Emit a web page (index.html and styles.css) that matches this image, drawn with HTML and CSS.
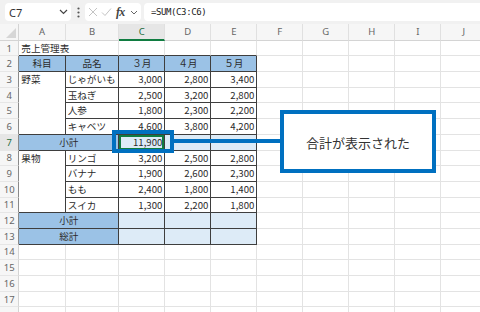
FILE: index.html
```html
<!DOCTYPE html>
<html lang="ja">
<head>
<meta charset="utf-8">
<title>売上管理表</title>
<link rel="stylesheet" href="styles.css">
</head>
<body>
<div class="app">
  <div class="toolbar">
    <div class="namebox"><span>C7</span>
      <svg width="9" height="6" viewBox="0 0 9 6"><polyline points="1,1 4.5,4.5 8,1" fill="none" stroke="#444" stroke-width="1.2"/></svg>
    </div>
    <div class="kebab"><svg width="3" height="11" viewBox="0 0 3 11"><circle cx="1.5" cy="1.5" r="1.1" fill="#555"/><circle cx="1.5" cy="5.5" r="1.1" fill="#555"/><circle cx="1.5" cy="9.5" r="1.1" fill="#555"/></svg></div>
    <div class="fxbox">
      <span class="ico"><svg width="10" height="10" viewBox="0 0 10 10"><path d="M1 1 L9 9 M9 1 L1 9" stroke="#c4c4c4" stroke-width="1" fill="none"/></svg></span>
      <span class="ico"><svg width="11" height="10" viewBox="0 0 11 10"><path d="M1 5.5 L4 8.5 L10 1.5" stroke="#c4c4c4" stroke-width="1" fill="none"/></svg></span>
      <span class="ico fx">fx</span>
      <span class="ico"><svg width="8" height="5" viewBox="0 0 8 5"><polyline points="1,1 4,4 7,1" fill="none" stroke="#666" stroke-width="1"/></svg></span>
    </div>
    <div class="formula">=SUM(C3:C6)</div>
  </div>

  <div class="sheet">
    <div class="corner"><svg width="10" height="10" viewBox="0 0 10 10"><polygon points="10,0 10,10 0,10" fill="#d6d6d6"/></svg></div>
    <div class="ch">A</div><div class="ch">B</div><div class="ch sel">C</div><div class="ch">D</div><div class="ch">E</div><div class="ch">F</div><div class="ch">G</div><div class="ch">H</div><div class="ch">I</div><div class="ch">J</div>

    <div class="rh">1</div>
    <div class="c span2 above">売上管理表</div><div class="c above"></div><div class="c above"></div><div class="c above"></div>
    <div class="c"></div><div class="c"></div><div class="c"></div><div class="c"></div><div class="c"></div>

    <div class="rh tl">2</div>
    <div class="c t hd">科目</div><div class="c t hd">品名</div><div class="c t hd">３月</div><div class="c t hd">４月</div><div class="c t hd">５月</div>
    <div class="c"></div><div class="c"></div><div class="c"></div><div class="c"></div><div class="c"></div>

    <div class="rh tl">3</div>
    <div class="c t span4 top">野菜</div><div class="c t">じゃがいも</div><div class="c t num">3,000</div><div class="c t num">2,800</div><div class="c t num">3,400</div>
    <div class="c"></div><div class="c"></div><div class="c"></div><div class="c"></div><div class="c"></div>

    <div class="rh tl">4</div>
    <div class="c t">玉ねぎ</div><div class="c t num">2,500</div><div class="c t num">3,200</div><div class="c t num">2,800</div>
    <div class="c"></div><div class="c"></div><div class="c"></div><div class="c"></div><div class="c"></div>

    <div class="rh tl">5</div>
    <div class="c t">人参</div><div class="c t num">1,800</div><div class="c t num">2,300</div><div class="c t num">2,200</div>
    <div class="c"></div><div class="c"></div><div class="c"></div><div class="c"></div><div class="c"></div>

    <div class="rh tl">6</div>
    <div class="c t">キャベツ</div><div class="c t num">4,600</div><div class="c t num">3,800</div><div class="c t num">4,200</div>
    <div class="c"></div><div class="c"></div><div class="c"></div><div class="c"></div><div class="c"></div>

    <div class="rh tl selr">7</div>
    <div class="c t hd span2">小計</div><div class="c t lt num cur">11,900</div><div class="c t lt"></div><div class="c t lt"></div>
    <div class="c"></div><div class="c"></div><div class="c"></div><div class="c"></div><div class="c"></div>

    <div class="rh tl">8</div>
    <div class="c t span4 top">果物</div><div class="c t">リンゴ</div><div class="c t num">3,200</div><div class="c t num">2,500</div><div class="c t num">2,800</div>
    <div class="c"></div><div class="c"></div><div class="c"></div><div class="c"></div><div class="c"></div>

    <div class="rh tl">9</div>
    <div class="c t">バナナ</div><div class="c t num">1,900</div><div class="c t num">2,600</div><div class="c t num">2,300</div>
    <div class="c"></div><div class="c"></div><div class="c"></div><div class="c"></div><div class="c"></div>

    <div class="rh tl">10</div>
    <div class="c t">もも</div><div class="c t num">2,400</div><div class="c t num">1,800</div><div class="c t num">1,400</div>
    <div class="c"></div><div class="c"></div><div class="c"></div><div class="c"></div><div class="c"></div>

    <div class="rh tl">11</div>
    <div class="c t">スイカ</div><div class="c t num">1,300</div><div class="c t num">2,200</div><div class="c t num">1,800</div>
    <div class="c"></div><div class="c"></div><div class="c"></div><div class="c"></div><div class="c"></div>

    <div class="rh tl">12</div>
    <div class="c t hd span2">小計</div><div class="c t lt"></div><div class="c t lt"></div><div class="c t lt"></div>
    <div class="c"></div><div class="c"></div><div class="c"></div><div class="c"></div><div class="c"></div>

    <div class="rh tl">13</div>
    <div class="c t hd span2">総計</div><div class="c t lt"></div><div class="c t lt"></div><div class="c t lt"></div>
    <div class="c"></div><div class="c"></div><div class="c"></div><div class="c"></div><div class="c"></div>

    <div class="rh">14</div>
    <div class="c"></div><div class="c"></div><div class="c"></div><div class="c"></div><div class="c"></div><div class="c"></div><div class="c"></div><div class="c"></div><div class="c"></div><div class="c"></div>
    <div class="rh">15</div>
    <div class="c"></div><div class="c"></div><div class="c"></div><div class="c"></div><div class="c"></div><div class="c"></div><div class="c"></div><div class="c"></div><div class="c"></div><div class="c"></div>
    <div class="rh">16</div>
    <div class="c"></div><div class="c"></div><div class="c"></div><div class="c"></div><div class="c"></div><div class="c"></div><div class="c"></div><div class="c"></div><div class="c"></div><div class="c"></div>
    <div class="rh">17</div>
    <div class="c"></div><div class="c"></div><div class="c"></div><div class="c"></div><div class="c"></div><div class="c"></div><div class="c"></div><div class="c"></div><div class="c"></div><div class="c"></div>
    <div class="rh"></div>
    <div class="c"></div><div class="c"></div><div class="c"></div><div class="c"></div><div class="c"></div><div class="c"></div><div class="c"></div><div class="c"></div><div class="c"></div><div class="c"></div>
  </div>

  <div class="callout-box"></div>
  <div class="callout-line"></div>
  <div class="callout-note">合計が表示された</div>
</div>
</body>
</html>
```

FILE: styles.css
```css
* { box-sizing: border-box; }
body {
  margin: 0;
  width: 480px;
  height: 312px;
  overflow: hidden;
  background: #fff;
  font-family: "Noto Sans CJK JP", "Noto Sans", sans-serif;
}
.app {
  position: relative;
  width: 480px;
  height: 312px;
  overflow: hidden;
}
.toolbar {
  height: 24px;
  background: #f1f1f1;
  display: flex;
  align-items: center;
  padding-left: 5px;
}
.namebox {
  width: 66px;
  height: 18px;
  background: #fff;
  border-radius: 4px;
  display: flex;
  align-items: center;
  justify-content: space-between;
  padding: 0 3px 0 4px;
  font-family: "Noto Sans", sans-serif;
  font-size: 11px;
  color: #333;
}
.kebab {
  width: 14px;
  display: flex;
  justify-content: center;
  align-items: center;
}
.fxbox {
  width: 56px;
  height: 18px;
  background: #fff;
  border-radius: 4px;
  display: flex;
  align-items: center;
  padding-left: 1px;
}
.ico {
  width: 14px;
  display: flex;
  justify-content: center;
  align-items: center;
}
.fx {
  font-family: "Liberation Serif", serif;
  font-style: italic;
  font-weight: bold;
  font-size: 12px;
  color: #444;
  letter-spacing: -0.5px;
}
.formula {
  flex: 1;
  height: 18px;
  margin-left: 3px;
  background: #fff;
  border-radius: 4px 0 0 4px;
  padding-left: 7px;
  display: flex;
  align-items: center;
  font-family: "DejaVu Sans Mono", monospace;
  font-size: 9px;
  letter-spacing: -0.4px;
  color: #222;
}
.sheet {
  display: grid;
  grid-template-columns: 19.3px 46.4px 53.6px repeat(8, 46px);
  grid-template-rows: 16.7px repeat(18, 15.7px);
}
.corner {
  background: #f6f6f6;
  border-right: 1px solid #d4d4d4;
  border-bottom: 1px solid #d4d4d4;
  display: flex;
  align-items: flex-end;
  justify-content: flex-end;
  padding: 0 2px 2px 0;
}
.ch, .rh {
  background: #f6f6f6;
  color: #666;
  font-family: "Noto Sans", sans-serif;
  font-size: 9.5px;
  display: flex;
  align-items: center;
  justify-content: center;
}
.ch {
  border-right: 1px solid #e0e0e0;
  border-bottom: 1px solid #d4d4d4;
}
.ch.sel {
  background: #e6e6e6;
  color: #1b6b3e;
  border-bottom: 2px solid #107c41;
}
.rh {
  border-right: 1px solid #d4d4d4;
  border-bottom: 1px solid #e6e6e6;
}
.rh.tl { border-right-color: #8a8a8a; }
.rh.selr {
  background: #e6e6e6;
  color: #1b6b3e;
}
.c {
  border-right: 1px solid #e3e3e3;
  border-bottom: 1px solid #e3e3e3;
  font-size: 9.6px;
  line-height: 1;
  color: #2b2b2b;
  display: flex;
  align-items: center;
  padding: 1px 2px 0 2px;
  white-space: nowrap;
}
.t {
  border-right-color: #3e3e3e;
  border-bottom-color: #3e3e3e;
}
.above { border-bottom-color: #3e3e3e; }
.hd {
  background: #9bc2e6;
  justify-content: center;
}
.lt { background: #ddebf7; }
.num { justify-content: flex-end; }
.top {
  align-items: flex-start;
  padding-top: 3px;
}
.span2 { grid-column: span 2; }
.span4 { grid-row: span 4; }
.cur { box-shadow: inset 0 0 0 2px #107c41; }

.callout-box {
  position: absolute;
  left: 112px;
  top: 130px;
  width: 62px;
  height: 23px;
  border: 4px solid #0070c0;
}
.callout-line {
  position: absolute;
  left: 174px;
  top: 139px;
  width: 106px;
  height: 4px;
  background: #0070c0;
}
.callout-note {
  position: absolute;
  left: 280px;
  top: 110px;
  width: 156px;
  height: 63px;
  border: 4px solid #0070c0;
  background: #fff;
  display: flex;
  align-items: center;
  justify-content: center;
  font-size: 13px;
  color: #333;
  padding-top: 2px;
}
```
